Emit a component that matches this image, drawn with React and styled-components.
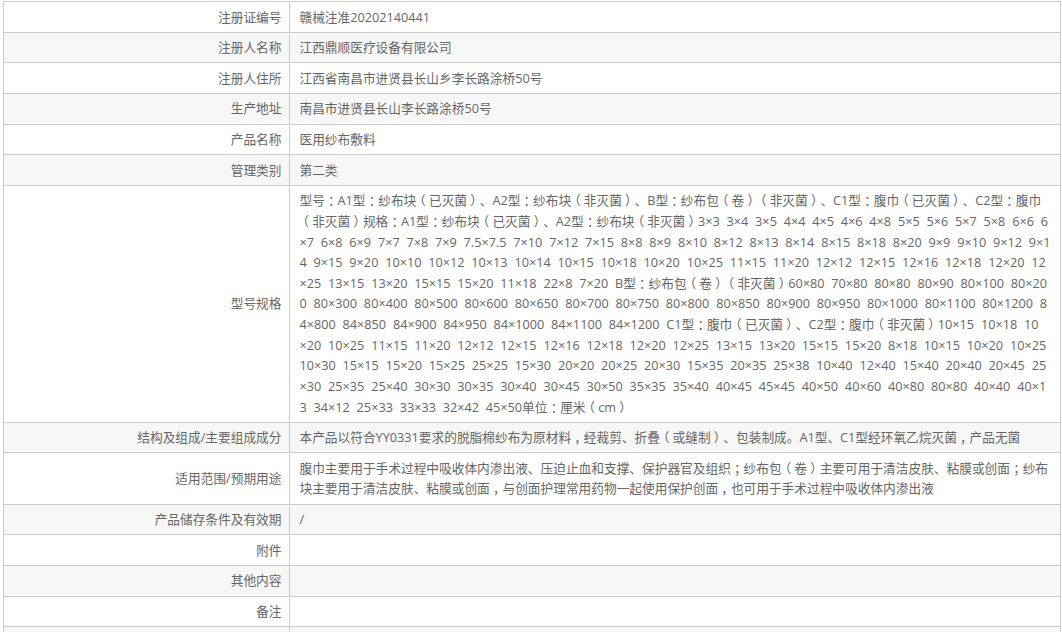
import React from "react"
import styled, { createGlobalStyle } from "styled-components"

const GlobalStyle = createGlobalStyle`
    html, body {
        margin: 0;
        padding: 0;
        height: 632px;
        overflow: hidden;
        background: #fff;
    }
`

const Page = styled.div`
    height: 631px;
    overflow: hidden;
    padding: 1px 1px 0 3px;
    font-family: "Open Sans", "Noto Sans CJK SC", sans-serif;
    font-size: 12.7px;
    word-spacing: 3.5px;
    line-height: 20.64px;
    color: #666;
`

const Table = styled.div`
    border-top: 1px solid #ccc;
    border-left: 1px solid #ccc;
    border-right: 1px solid #ccc;
`

const Row = styled.div`
    display: grid;
    grid-template-columns: 286px 1fr;
    border-bottom: 1px solid #ccc;
    background: ${props => (props.$shaded ? "#f7f7f7" : "#fff")};
`

const Label = styled.div`
    display: flex;
    align-items: center;
    justify-content: flex-end;
    padding: 4.5px 7.5px 4.5px 0;
    border-right: 1px solid #ccc;
`

const Value = styled.div`
    min-height: 20.64px;
    padding: 4.5px 9.5px;
`

const Line = styled.div`
    height: 20.64px;
    white-space: nowrap;
`

// the Chinese punctuation sits in the middle of its box in the screenshot
const Mark = styled.span`
    font-feature-settings: "halt";
    padding: 0 0.25em;
`

const withMarks = (text) =>
    text.split(/([：；（），])/).map((part, i) =>
        /^[：；（），]$/.test(part) ? <Mark key={i}>{part}</Mark> : part
    )

const rows = [
    ["注册证编号", ["赣械注准20202140441"]],
    ["注册人名称", ["江西鼎顺医疗设备有限公司"]],
    ["注册人住所", ["江西省南昌市进贤县长山乡李长路涂桥50号"]],
    ["生产地址", ["南昌市进贤县长山李长路涂桥50号"]],
    ["产品名称", ["医用纱布敷料"]],
    ["管理类别", ["第二类"]],
    ["型号规格", [
        "型号：A1型：纱布块（已灭菌）、A2型：纱布块（非灭菌）、B型：纱布包（卷）（非灭菌）、C1型：腹巾（已灭菌）、C2型：腹巾",
        "（非灭菌）规格：A1型：纱布块（已灭菌）、A2型：纱布块（非灭菌）3×3 3×4 3×5 4×4 4×5 4×6 4×8 5×5 5×6 5×7 5×8 6×6 6",
        "×7 6×8 6×9 7×7 7×8 7×9 7.5×7.5 7×10 7×12 7×15 8×8 8×9 8×10 8×12 8×13 8×14 8×15 8×18 8×20 9×9 9×10 9×12 9×1",
        "4 9×15 9×20 10×10 10×12 10×13 10×14 10×15 10×18 10×20 10×25 11×15 11×20 12×12 12×15 12×16 12×18 12×20 12",
        "×25 13×15 13×20 15×15 15×20 11×18 22×8 7×20 B型：纱布包（卷）（非灭菌）60×80 70×80 80×80 80×90 80×100 80×20",
        "0 80×300 80×400 80×500 80×600 80×650 80×700 80×750 80×800 80×850 80×900 80×950 80×1000 80×1100 80×1200 8",
        "4×800 84×850 84×900 84×950 84×1000 84×1100 84×1200 C1型：腹巾（已灭菌）、C2型：腹巾（非灭菌）10×15 10×18 10",
        "×20 10×25 11×15 11×20 12×12 12×15 12×16 12×18 12×20 12×25 13×15 13×20 15×15 15×20 8×18 10×15 10×20 10×25",
        "10×30 15×15 15×20 15×25 25×25 15×30 20×20 20×25 20×30 15×35 20×35 25×38 10×40 12×40 15×40 20×40 20×45 25",
        "×30 25×35 25×40 30×30 30×35 30×40 30×45 30×50 35×35 35×40 40×45 45×45 40×50 40×60 40×80 80×80 40×40 40×1",
        "3 34×12 25×33 33×33 32×42 45×50单位：厘米（cm）",
    ]],
    ["结构及组成/主要组成成分", ["本产品以符合YY0331要求的脱脂棉纱布为原材料，经裁剪、折叠（或缝制）、包装制成。A1型、C1型经环氧乙烷灭菌，产品无菌"]],
    ["适用范围/预期用途", [
        "腹巾主要用于手术过程中吸收体内渗出液、压迫止血和支撑、保护器官及组织；纱布包（卷）主要可用于清洁皮肤、粘膜或创面；纱布",
        "块主要用于清洁皮肤、粘膜或创面，与创面护理常用药物一起使用保护创面，也可用于手术过程中吸收体内渗出液",
    ]],
    ["产品储存条件及有效期", ["/"]],
    ["附件", []],
    ["其他内容", []],
    ["备注", []],
    ["", []],
]

const App = () => {
    return (
        <Page>
            <GlobalStyle />
            <Table>
                {rows.map((item, i) => (
                    <Row key={i} $shaded={i % 2 === 1}>
                        <Label>{item[0]}</Label>
                        <Value>
                            {item[1].map((line, j) => (
                                <Line key={j}>{withMarks(line)}</Line>
                            ))}
                        </Value>
                    </Row>
                ))}
            </Table>
        </Page>
    )
}

export default App
